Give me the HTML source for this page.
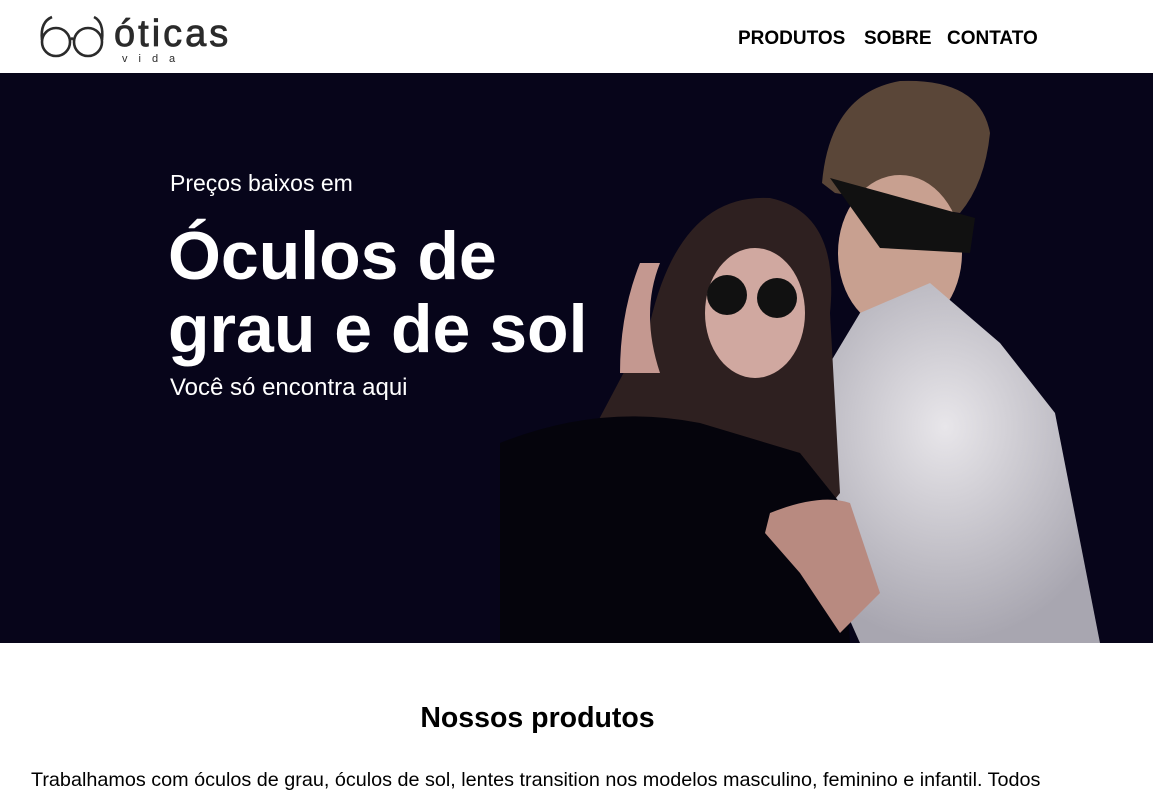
<!DOCTYPE html>
<html><head><meta charset="utf-8"><style>
*{margin:0;padding:0;box-sizing:border-box}
body{width:1153px;height:810px;overflow:hidden;background:#fff;font-family:"Liberation Sans",sans-serif;position:relative}
.hdr{position:absolute;left:0;top:0;width:1153px;height:73px;background:#fff}
.nav{position:absolute;top:28px;font-weight:bold;font-size:19px;color:#000}
.hero{position:absolute;left:0;top:73px;width:1153px;height:570px;background:#07051a;overflow:hidden}
.t{position:absolute;color:#fff;white-space:nowrap}
</style></head><body>
<div class="hdr">
<svg width="240" height="70" style="position:absolute;left:30px;top:0">
<g fill="none" stroke="#2b2b2b" stroke-width="2.6">
<circle cx="26" cy="42" r="14"/><circle cx="58" cy="42" r="14"/>
<path d="M40 40 Q42 37 44 40"/>
<path d="M12 40 Q10 22 22 17"/><path d="M72 40 Q74 22 64 17"/>
</g>
<text x="84" y="46" font-family="Liberation Sans,sans-serif" font-size="38" fill="#2b2b2b" letter-spacing="3" stroke="#2b2b2b" stroke-width="0.8">óticas</text>
<text x="92" y="62" font-family="Liberation Sans,sans-serif" font-size="11" fill="#2b2b2b" letter-spacing="11">vida</text>
</svg>
<div class="nav" style="left:738px">PRODUTOS</div>
<div class="nav" style="left:864px">SOBRE</div>
<div class="nav" style="left:947px">CONTATO</div>
</div>
<div class="hero">
<svg width="1153" height="570" style="position:absolute;left:0;top:0">
<defs><radialGradient id="g" cx="0.5" cy="0.4" r="0.6"><stop offset="0" stop-color="#e8e6ea"/><stop offset="1" stop-color="#a8a6b0"/></radialGradient></defs>
<path d="M822 110 Q830 20 900 8 Q980 5 990 60 Q985 110 960 140 L835 120 Z" fill="#5a4638"/>
<ellipse cx="900" cy="180" rx="62" ry="78" fill="#c8a090"/>
<path d="M830 105 L975 145 L970 180 L880 175 Z" fill="#111"/>
<path d="M860 240 L930 210 L1000 270 L1055 340 L1100 570 L860 570 L820 480 L790 380 L830 290 Z" fill="url(#g)"/>
<path d="M650 250 Q680 120 770 125 Q840 140 830 240 L840 420 L760 520 L600 570 L540 560 L560 420 Z" fill="#2e2020"/>
<ellipse cx="755" cy="240" rx="50" ry="65" fill="#d0a8a0"/>
<circle cx="727" cy="222" r="20" fill="#111"/><circle cx="777" cy="225" r="20" fill="#111"/>
<path d="M660 190 Q640 240 660 300 L620 300 Q620 240 640 190 Z" fill="#c49890"/>
<path d="M500 370 Q600 330 700 350 L800 380 L840 430 L850 570 L500 570 Z" fill="#05040c"/>
<path d="M770 440 Q820 420 850 430 L880 520 L840 560 L800 500 L765 460 Z" fill="#b88a80"/>
</svg>
<div class="t" style="left:170px;top:97px;font-size:23px">Preços baixos em</div>
<div class="t" style="left:168px;top:147px;font-size:68px;font-weight:bold;line-height:73px">Óculos de<br>grau e de sol</div>
<div class="t" style="left:170px;top:301px;font-size:24px">Você só encontra aqui</div>
</div>
<div style="position:absolute;left:0;width:1075px;top:702px;text-align:center;font-weight:bold;font-size:28.5px">Nossos produtos</div>
<div style="position:absolute;left:31px;top:769px;font-size:19.8px;white-space:nowrap">Trabalhamos com óculos de grau, óculos de sol, lentes transition nos modelos masculino, feminino e infantil. Todos</div>
</body></html>
